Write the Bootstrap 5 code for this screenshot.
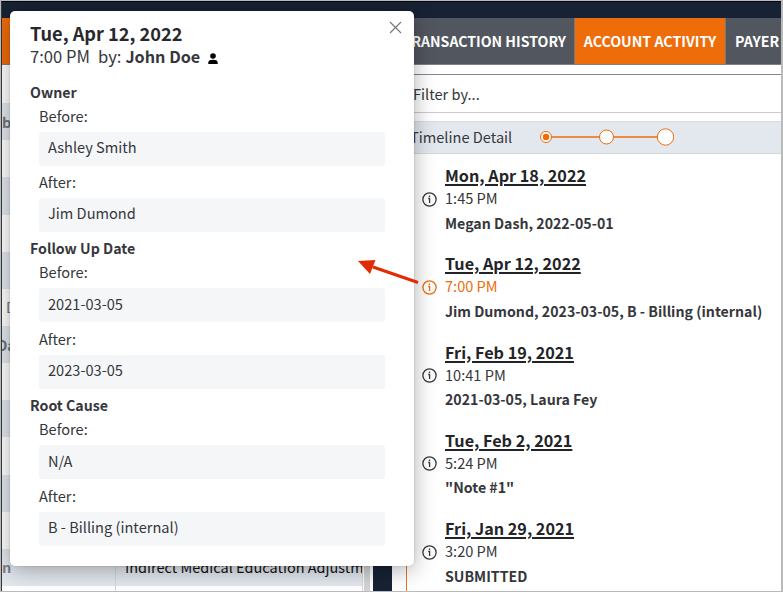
<!DOCTYPE html>
<html lang="en">
<head>
<meta charset="utf-8">
<meta name="viewport" content="width=device-width, initial-scale=1">
<title>Account Activity</title>
<link href="https://cdn.jsdelivr.net/npm/bootstrap@5.3.0/dist/css/bootstrap.min.css" rel="stylesheet">
<style>
:root{--navy:#172234;--orange:#ef6c0a;--slate:#52565f;--band:#e3e8ef;--ink:#36373c}
html,body{height:592px;overflow:hidden}
body{font-family:"Noto Sans CJK SC","Noto Sans",sans-serif;font-size:14.6px;line-height:24px;color:var(--ink);background:#fff}
.app-frame{width:783px;height:592px;border:1px solid #b9bab9;border-right-width:2px;background:#fff}
.app-inner{border-left:1px solid #34373b;border-top:1px solid #05080d}
.top-strip{height:16px;background:var(--navy)}
.tab-strip{height:47px;background:var(--slate);border-bottom:1px solid #7d8087;color:#fff;font-weight:700;font-size:14.2px}
.tab-cell{white-space:nowrap;border-right:1px solid #777}
.tab-left{width:390px;background:var(--orange)}
.tab-history{width:183px}
.tab-history span{font-size:14.1px}
.tab-active{width:151px;background:var(--orange)}
.tab-next{padding-left:9px}
.claims{width:361px;padding-top:1px;border-right:1px solid #d5d7da;font-size:14.5px;color:#111}
.claims-row{height:37.15px;flex:none}
.claims-row:nth-child(even){background:var(--band)}
.claims-row .clipped{margin-left:-5px}
.claims-key{width:114px;border-right:1px solid #d3d7dd;font-weight:700;color:#7d808c}
.claims-value{padding-left:9px}
.scroll-rail{width:6px;margin:0 3px 0 1px;background:#d3d4d5}
.gutter{width:19px;background:var(--navy)}
.filter-box{height:39px;margin-top:9px;padding-left:21px;border-top:1px solid #85858f;border-bottom:1px solid #cbcbd2}
.detail-bar{height:33px;margin-top:8px;padding:0 0 2px 18px;background:var(--band);border-top:1px solid #d8dce2;border-bottom:1px solid #d5d9df}
.zoom-steps{margin:0 0 0 23.500px}
.event-list{margin-left:14px;border-left:1.5px solid #d9792f;padding:9px 0 0 15px;height:440px}
.event{height:88.25px}
.event-day{margin-left:23px;font-size:16.2px;font-weight:700;color:#232428;line-height:24px;text-decoration:underline;text-decoration-thickness:1.5px;text-underline-offset:2px}
.event-time{line-height:21px}
.event-note{padding-left:23px;line-height:24px;margin-top:2.500px;font-weight:700;font-size:14.16px}
.event svg{width:15px;height:15px;margin:3px 8px 0 0}
.current{color:var(--orange)}
.detail-pop{left:9px;top:9.500px;width:404px;height:555px;border-radius:5px;background:#fff;box-shadow:0 4px 22px rgba(0,0,0,.32),0 0 2px rgba(0,0,0,.2);padding:9.500px 29px 0 20px}
.pop-title{font-size:18.2px;font-weight:700;color:#27282c;line-height:26px}
.pop-sub{font-size:16.6px;line-height:20px}
.pop-sub strong{font-size:16.2px}
.changes{padding-top:13.500px}
.change{height:156.9px}
.change-name{font-size:14.2px;font-weight:700}
.change-body{margin-left:9px}
.field{height:34px;margin:4px 0 4.300px;padding:0 0 3px 9px;border-radius:3px;background:#f5f6f8}
.close-x{right:12px;top:10.500px}
.pointer{left:350px;top:250px}
</style>
</head>
<body>
<div class="app-frame position-relative overflow-hidden">
 <div class="app-inner h-100 d-flex flex-column">
  <div class="top-strip flex-shrink-0"></div>
  <nav class="tab-strip d-flex flex-shrink-0">
   <div class="tab-left"></div>
   <div class="tab-cell tab-history d-flex align-items-center justify-content-end pe-2"><span>TRANSACTION HISTORY</span></div>
   <div class="tab-cell tab-active d-flex align-items-center justify-content-center"><span>ACCOUNT ACTIVITY</span></div>
   <div class="tab-next d-flex align-items-center"><span>PAYER</span></div>
  </nav>
  <div class="d-flex flex-grow-1 overflow-hidden">
   <div class="claims d-flex flex-column overflow-hidden flex-shrink-0">
    <div class="claims-row d-flex"></div>
    <div class="claims-row d-flex align-items-center"><span class="fw-bold text-secondary">b</span></div>
    <div class="claims-row"></div>
    <div class="claims-row"></div>
    <div class="claims-row"></div>
    <div class="claims-row"></div>
    <div class="claims-row d-flex align-items-center"><span class="text-secondary ps-1">D</span></div>
    <div class="claims-row d-flex align-items-center"><span class="fw-bold text-secondary clipped">Da</span></div>
    <div class="claims-row"></div>
    <div class="claims-row"></div>
    <div class="claims-row"></div>
    <div class="claims-row"></div>
    <div class="claims-row"></div>
    <div class="claims-row d-flex"><div class="claims-key d-flex align-items-center flex-shrink-0">n</div><div class="claims-value d-flex align-items-center text-nowrap"><span>Indirect Medical Education Adjustment</span></div></div>
    <div class="claims-row d-flex"><div class="claims-key flex-shrink-0"></div></div>
   </div>
   <div class="scroll-rail flex-shrink-0"></div>
   <div class="gutter flex-shrink-0"></div>
   <main class="flex-grow-1">
    <div class="filter-box d-flex align-items-center"><span>Filter by...</span></div>
    <div class="detail-bar d-flex align-items-center">
     <span>Timeline Detail</span>
     <svg class="zoom-steps" width="138" height="20" viewBox="0 0 138 20" fill="#fff" stroke="#ef6c0a">
      <path d="M10 10H124" stroke-width="1.5"/>
      <circle cx="10" cy="10" r="5.5"/><circle cx="10" cy="10" r="3.2" fill="#ef6c0a" stroke="none"/>
      <circle cx="70.5" cy="10" r="7"/><circle cx="129.5" cy="10" r="8.2"/>
     </svg>
    </div>
    <div class="event-list">
     <div class="event"><div class="event-day"><span>Mon, Apr 18, 2022</span></div><div class="event-time d-flex align-items-center"><svg viewBox="0 0 15 15" fill="none" stroke="currentColor"><circle cx="7.5" cy="7.5" r="6.6" stroke-width="1.3"/><path d="M6.200 6.500H7.600V11M7.500 3.600v1.500" stroke-width="1.3"/></svg>1:45 PM</div><div class="event-note">Megan Dash, 2022-05-01</div></div>
     <div class="event"><div class="event-day"><span>Tue, Apr 12, 2022</span></div><div class="event-time current d-flex align-items-center"><svg viewBox="0 0 15 15" fill="none" stroke="currentColor"><circle cx="7.5" cy="7.5" r="6.6" stroke-width="1.3"/><path d="M6.200 6.500H7.600V11M7.500 3.600v1.500" stroke-width="1.3"/></svg>7:00 PM</div><div class="event-note">Jim Dumond, 2023-03-05, B - Billing (internal)</div></div>
     <div class="event"><div class="event-day"><span>Fri, Feb 19, 2021</span></div><div class="event-time d-flex align-items-center"><svg viewBox="0 0 15 15" fill="none" stroke="currentColor"><circle cx="7.5" cy="7.5" r="6.6" stroke-width="1.3"/><path d="M6.200 6.500H7.600V11M7.500 3.600v1.500" stroke-width="1.3"/></svg>10:41 PM</div><div class="event-note">2021-03-05, Laura Fey</div></div>
     <div class="event"><div class="event-day"><span>Tue, Feb 2, 2021</span></div><div class="event-time d-flex align-items-center"><svg viewBox="0 0 15 15" fill="none" stroke="currentColor"><circle cx="7.5" cy="7.5" r="6.6" stroke-width="1.3"/><path d="M6.200 6.500H7.600V11M7.500 3.600v1.500" stroke-width="1.3"/></svg>5:24 PM</div><div class="event-note">"Note #1"</div></div>
     <div class="event"><div class="event-day"><span>Fri, Jan 29, 2021</span></div><div class="event-time d-flex align-items-center"><svg viewBox="0 0 15 15" fill="none" stroke="currentColor"><circle cx="7.5" cy="7.5" r="6.6" stroke-width="1.3"/><path d="M6.200 6.500H7.600V11M7.500 3.600v1.500" stroke-width="1.3"/></svg>3:20 PM</div><div class="event-note">SUBMITTED</div></div>
    </div>
   </main>
  </div>
 </div>
 <section class="detail-pop position-absolute">
  <svg class="close-x position-absolute" width="13" height="13" viewBox="0 0 13 13" stroke="#77787b" stroke-width="1.2"><path d="M1 1l11 11M12 1L1 12"/></svg>
  <div class="pop-title"><span>Tue, Apr 12, 2022</span></div>
  <div class="pop-sub d-flex align-items-center"><span>7:00 PM</span><span class="ms-2">by:</span><strong class="ms-1">John Doe</strong><svg class="ms-2 mt-1" width="10" height="11" viewBox="0 0 10 11"><circle cx="5" cy="3" r="2.8"/><path d="M.3 11V9.4C.3 7.4 2.5 6.7 5 6.7s4.7.7 4.7 2.7V11z"/></svg></div>
  <div class="changes">
   <div class="change"><div class="change-name">Owner</div><div class="change-body">Before:<div class="field d-flex align-items-center">Ashley Smith</div>After:<div class="field d-flex align-items-center">Jim Dumond</div></div></div>
   <div class="change"><div class="change-name">Follow Up Date</div><div class="change-body">Before:<div class="field d-flex align-items-center">2021-03-05</div>After:<div class="field d-flex align-items-center">2023-03-05</div></div></div>
   <div class="change"><div class="change-name">Root Cause</div><div class="change-body">Before:<div class="field d-flex align-items-center">N/A</div>After:<div class="field d-flex align-items-center">B - Billing (internal)</div></div></div>
  </div>
 </section>
 <svg class="pointer position-absolute" width="72" height="40" viewBox="0 0 72 40"><path d="M67 31.5L22 16" stroke="#e22b05" stroke-width="3"/><path d="M7 10l17.500-1-5.500 14z" fill="#e22b05"/></svg>
</div>
<script src="https://cdn.jsdelivr.net/npm/bootstrap@5.3.0/dist/js/bootstrap.bundle.min.js"></script>
</body>
</html>
